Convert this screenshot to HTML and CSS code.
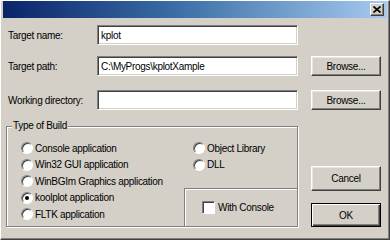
FILE: index.html
```html
<!DOCTYPE html>
<html lang="en">
<head>
  <meta charset="UTF-8" />
  <title>Project settings</title>
  <link rel="stylesheet" href="styles.css">
</head>
<body>
  <div class="window">
    <div class="titlebar">
      <button class="close-btn" aria-label="Close">
        <svg width="8" height="7" viewBox="0 0 8 7"><path d="M0.5 0.5L7.5 6.5M7.5 0.5L0.5 6.5" stroke="#000" stroke-width="1.7" fill="none"/></svg>
      </button>
    </div>

    <div class="content">
      <div class="row">
        <label class="field-label">Target name:</label>
        <input class="field" type="text" value="kplot" />
      </div>
      <div class="row row-path">
        <label class="field-label">Target path:</label>
        <input class="field" type="text" value="C:\MyProgs\kplotXample" />
        <button class="btn">Browse...</button>
      </div>
      <div class="row row-working">
        <label class="field-label">Working directory:</label>
        <input class="field" type="text" value="" />
        <button class="btn">Browse...</button>
      </div>

      <div class="bottom">
        <fieldset class="group">
          <legend>Type of Build</legend>
          <div class="build">
            <div class="col-left">
              <div class="option"><span class="radio"></span>Console application</div>
              <div class="option"><span class="radio"></span>Win32 GUI application</div>
              <div class="option"><span class="radio"></span>WinBGIm Graphics application</div>
              <div class="option"><span class="radio checked"></span>koolplot application</div>
              <div class="option"><span class="radio"></span>FLTK application</div>
            </div>
            <div class="col-right">
              <div class="option"><span class="radio"></span>Object Library</div>
              <div class="option"><span class="radio"></span>DLL</div>
              <div class="console-box">
                <div class="option"><span class="checkbox"></span>With Console</div>
              </div>
            </div>
          </div>
        </fieldset>

        <div class="actions">
          <button class="btn btn-cancel">Cancel</button>
          <button class="btn btn-default">OK</button>
        </div>
      </div>
    </div>
  </div>
</body>
</html>
```

FILE: styles.css
```css
body {
  margin: 0;
  padding: 0;
  font-family: 'Liberation Sans', Arial, sans-serif;
  font-size: 10px;
  letter-spacing: -0.3px;
  color: #000;
  background-color: #d4d0c8;
}

.window {
  box-sizing: border-box;
  width: 390px;
  height: 240px;
  padding: 0 2px 2px 2px;
  background-color: #d4d0c8;
  border-top: 1px solid #ffffff;
  border-left: 1px solid #ffffff;
  border-right: 1px solid #404040;
  border-bottom: 1px solid #404040;
  box-shadow: inset -1px -1px #808080;
}

.titlebar {
  height: 17px;
  display: flex;
  justify-content: flex-end;
  align-items: center;
  padding-right: 3px;
  background: linear-gradient(to right, #0a246a, #3a6ea5 45%, #a6caf0);
}

.close-btn {
  box-sizing: border-box;
  width: 14px;
  height: 13px;
  padding: 0;
  display: flex;
  align-items: center;
  justify-content: center;
  background-color: #d4d0c8;
  border: 1px solid;
  border-color: #ffffff #404040 #404040 #ffffff;
  box-shadow: inset -1px -1px #808080;
}

.content {
  padding: 7px 0 0 3px;
}

/* top rows */
.row {
  display: grid;
  grid-template-columns: 89px 201px 83px;
  align-items: center;
  height: 20px;
  padding-left: 2px;
}

.row .btn {
  margin-left: 13px;
}

.row-path {
  margin-top: 11px;
}

.row-working {
  margin-top: 14px;
}

.field-label {
  white-space: nowrap;
}

.field {
  box-sizing: border-box;
  height: 20px;
  width: 201px;
  margin: 0;
  padding: 0 3px;
  font: inherit;
  letter-spacing: inherit;
  color: #000;
  background-color: #fff;
  border: 1px solid;
  border-color: #808080 #ffffff #ffffff #808080;
  box-shadow: inset 1px 1px #404040, inset -1px -1px #d4d0c8;
  outline: none;
}

.btn {
  box-sizing: border-box;
  height: 20px;
  width: 70px;
  margin: 0;
  padding: 0;
  font: inherit;
  letter-spacing: inherit;
  color: #000;
  background-color: #d4d0c8;
  border: 1px solid;
  border-color: #ffffff #404040 #404040 #ffffff;
  box-shadow: inset -1px -1px #808080, inset 1px 1px #e8e6e2;
}

/* bottom area */
.bottom {
  display: flex;
  margin-top: 10px;
}

.group {
  box-sizing: border-box;
  width: 292px;
  margin: 0;
  padding: 0;
  border: 1px solid #808080;
  box-shadow: inset 1px 1px #ffffff, 1px 1px #ffffff;
}

.group legend {
  margin-left: 5px;
  padding: 0 1px;
  line-height: 12px;
  background-color: #d4d0c8;
}

.build {
  display: grid;
  grid-template-columns: 177px 1fr;
  height: 94px;
}

.col-left {
  padding: 8px 0 0 14px;
}

.col-right {
  display: flex;
  flex-direction: column;
  padding-top: 8px;
}

.col-right > .option {
  padding-left: 9px;
}

.option {
  display: flex;
  align-items: center;
  height: 16.5px;
  white-space: nowrap;
}

.radio {
  box-sizing: border-box;
  width: 12px;
  height: 12px;
  margin-right: 2px;
  border-radius: 50%;
  background-color: #fff;
  border: 1px solid;
  border-color: #808080 #ffffff #ffffff #808080;
  box-shadow: inset 1px 1px #404040;
  position: relative;
}

.radio.checked::after {
  content: "";
  position: absolute;
  left: 3px;
  top: 3px;
  width: 4px;
  height: 4px;
  border-radius: 50%;
  background-color: #000;
}

.console-box {
  margin-top: auto;
  height: 37px;
  display: flex;
  align-items: center;
  padding-left: 17px;
  border-top: 1px solid #808080;
  border-left: 1px solid #808080;
  box-shadow: inset 1px 1px #ffffff;
}

.checkbox {
  box-sizing: border-box;
  width: 13px;
  height: 13px;
  margin-right: 3px;
  background-color: #fff;
  border: 1px solid;
  border-color: #808080 #ffffff #ffffff #808080;
  box-shadow: inset 1px 1px #404040;
}

.actions {
  display: flex;
  flex-direction: column;
  margin-left: 13px;
}

.btn-cancel {
  height: 25px;
  margin-top: 46px;
}

.btn-default {
  height: 24px;
  margin-top: 12px;
  border: 1px solid #000;
  box-shadow: inset 1px 1px #ffffff, inset -1px -1px #404040, inset -2px -2px #808080;
}
```
